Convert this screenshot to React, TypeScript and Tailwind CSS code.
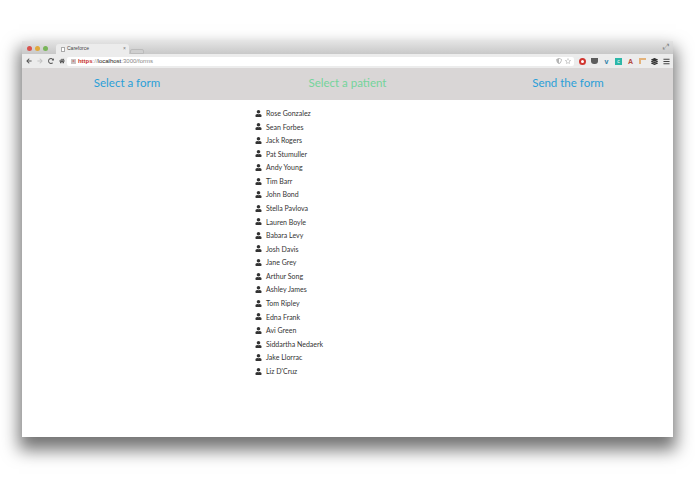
import { FaUser, FaHome, FaArrowLeft, FaArrowRight, FaRedoAlt, FaRegStar, FaShieldAlt, FaBars, FaLayerGroup } from 'react-icons/fa';

const patients = [
  'Rose Gonzalez',
  'Sean Forbes',
  'Jack Rogers',
  'Pat Stumuller',
  'Andy Young',
  'Tim Barr',
  'John Bond',
  'Stella Pavlova',
  'Lauren Boyle',
  'Babara Levy',
  'Josh Davis',
  'Jane Grey',
  'Arthur Song',
  'Ashley James',
  'Tom Ripley',
  'Edna Frank',
  'Avi Green',
  'Siddartha Nedaerk',
  'Jake Llorrac',
  "Liz D'Cruz",
];

function BrowserChrome() {
  return (
    <div className="h-[27px] flex flex-col bg-[#d9d9d9] font-['Liberation_Sans',sans-serif]">
      <div className="h-[13px] flex items-end bg-gradient-to-b from-[#e4e4e4] to-[#c8c8c8]">
        <div className="flex items-center gap-[3px] pl-[5px] pb-[3px]">
          <span className="w-[5px] h-[5px] rounded-full bg-[#d9534f]" />
          <span className="w-[5px] h-[5px] rounded-full bg-[#e0a93c]" />
          <span className="w-[5px] h-[5px] rounded-full bg-[#79b55a]" />
        </div>
        <div className="ml-[8px] w-[73px] h-[10px] bg-[#ececec] rounded-t-[3px] flex items-center pl-[5px] pr-[3px] text-[5px] text-[#444]">
          <span className="w-[4px] h-[5px] border-[0.5px] border-[#aaa] bg-white mr-[2px]" />
          <span className="flex-1">Careforce</span>
          <span className="text-[#777]">×</span>
        </div>
        <div className="ml-[1px] w-[14px] h-[5px] bg-[#cfcfcf] border border-[#bbb] rounded-t-[2px]" />
        <div className="ml-auto mr-[4px] mb-[3px] text-[#888] text-[8px] leading-none">⤢</div>
      </div>
      <div className="h-[14px] flex items-center bg-[#ececec] pl-[4px] pr-[3px]">
        <div className="flex items-center gap-[5px] w-[41px] text-[#555]">
          <FaArrowLeft className="w-[6px] h-[6px]" />
          <FaArrowRight className="w-[6px] h-[6px] text-[#c4c4c4]" />
          <FaRedoAlt className="w-[6px] h-[6px]" />
          <FaHome className="w-[6px] h-[6px]" />
        </div>
        <div className="w-[508px] h-[9px] bg-white rounded-[2px] flex items-center pl-[4px] pr-[3px] text-[6px] leading-none">
          <span className="w-[5px] h-[5px] bg-[#c9c2c2] mr-[2px] text-[#c33] text-[4px] flex items-center justify-center">x</span>
          <span className="text-[#c8312b] font-bold">https</span>
          <span className="text-[#999]">://</span>
          <span className="text-[#222]">localhost</span>
          <span className="text-[#888]">:3000/forms</span>
          <FaShieldAlt className="ml-auto w-[6px] h-[6px] text-[#b5b5b5]" />
          <FaRegStar className="ml-[3px] w-[6px] h-[6px] text-[#b5b5b5]" />
        </div>
        <div className="flex items-center gap-[5px] ml-[5px]">
          <span className="w-[7px] h-[7px] rounded-full bg-white border-2 border-[#d0352f]" />
          <span className="w-[7px] h-[6px] rounded-b-[3px] bg-[#5d5d5d]" />
          <span className="w-[7px] text-center text-[7px] leading-none font-bold text-[#2b7ea8]">v</span>
          <span className="w-[7px] h-[7px] bg-[#2cb7a8] text-white text-[5px] leading-[7px] text-center">c</span>
          <span className="w-[7px] h-[7px] text-center text-[7px] leading-none font-bold text-[#b5473d]">A</span>
          <span className="w-[7px] h-[6px] border-t-2 border-l-2 border-[#e3b27a]" />
          <FaLayerGroup className="w-[7px] h-[7px] text-[#333]" />
          <FaBars className="w-[7px] h-[7px] text-[#444]" />
        </div>
      </div>
    </div>
  );
}

export default function App() {
  return (
    <div className="w-[695px] h-[494px] bg-white overflow-hidden pt-[41px] pl-[22px]">
      <div className="w-[651px] h-[396px] bg-white flex flex-col shadow-[0_10px_16px_3px_rgba(0,0,0,0.55)]">
        <BrowserChrome />
        <div className="h-[32px] bg-[#d9d6d6] flex justify-center items-center pb-[2px] font-['Lato',sans-serif] text-[11.5px] overflow-hidden">
          <div className="w-[220.5px] shrink-0 text-center text-[#2a9fd8]">Select a form</div>
          <div className="w-[220.5px] shrink-0 text-center text-[#74d49b]">Select a patient</div>
          <div className="w-[220.5px] shrink-0 text-center text-[#2a9fd8]">Send the form</div>
        </div>
        <ul className="pl-[233px] pt-[6.4px] font-['Lato',sans-serif] text-[7px] text-[#333]">
          {patients.map(name => (
            <li key={name} className="h-[13.58px] flex items-center">
              <FaUser className="w-[7px] h-[7px] text-[#333] mr-[4px]" />
              {name}
            </li>
          ))}
        </ul>
      </div>
    </div>
  );
}
